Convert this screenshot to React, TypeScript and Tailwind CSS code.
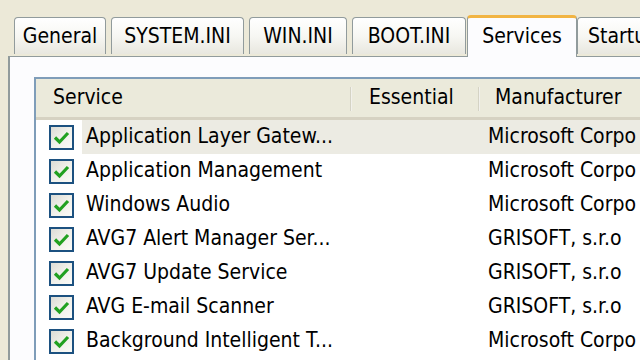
import { Fragment } from 'react';

const FONT = { fontFamily: '"DejaVu Sans Condensed", "DejaVu Sans", sans-serif' };

const tabs = [
  { label: 'General', w: 92 },
  { label: 'SYSTEM.INI', w: 133 },
  { label: 'WIN.INI', w: 98 },
  { label: 'BOOT.INI', w: 114 },
];

// last row only peeks in at the bottom edge, its text is below the fold
const rows = [
  ['Application Layer Gatew...', 'Microsoft Corpo'],
  ['Application Management', 'Microsoft Corpo'],
  ['Windows Audio', 'Microsoft Corpo'],
  ['AVG7 Alert Manager Ser...', 'GRISOFT, s.r.o'],
  ['AVG7 Update Service', 'GRISOFT, s.r.o'],
  ['AVG E-mail Scanner', 'GRISOFT, s.r.o'],
  ['Background Intelligent T...', 'Microsoft Corpo'],
  ['', ''],
];

function CheckBox() {
  return (
    <div className="w-[25px] h-[25px] shrink-0 border-2 border-[#1c5180] bg-gradient-to-br from-[#dcdcd6] via-[#f0f0ea] to-[#fbfbf8] flex items-center justify-center">
      <svg width="17" height="15" viewBox="0 0 17 15">
        <path d="M2 7.5 L6.5 12 L15 3" fill="none" stroke="#21a121" strokeWidth="3.2" />
      </svg>
    </div>
  );
}

export default function App() {
  return (
    <div className="w-[640px] h-[360px] overflow-hidden bg-[#ece9d8] text-black" style={FONT}>
      {/* tab strip */}
      <div className="flex items-end h-[56px] pl-[14px] pt-[14px]">
        {tabs.map((t) => (
          <div
            key={t.label}
            style={{ width: t.w }}
            className="h-[37px] mr-[5px] shrink-0 rounded-t-[4px] border border-b-0 border-[#919b9c] bg-gradient-to-b from-[#ffffff] via-[#f7f7f3] to-[#e8e7df] flex items-center justify-center text-[21px] pt-[2px] mb-[2px]"
          >
            {t.label}
          </div>
        ))}
        <div className="w-[110px] h-[42px] -ml-[4px] shrink-0 rounded-t-[4px] border-x border-[#919b9c] border-t-[3px] border-t-[#f1b443] bg-[#fcfcfe] flex items-start justify-center pt-[3px] text-[21px] -mb-[1px] relative z-10">
          Services
        </div>
        <div className="w-[80px] h-[37px] shrink-0 rounded-tl-[4px] border border-b-0 border-[#919b9c] bg-gradient-to-b from-[#ffffff] via-[#f7f7f3] to-[#e8e7df] flex items-center pl-[10px] pt-[2px] text-[21px] mb-[2px]">
          Startup
        </div>
      </div>

      {/* panel */}
      <div className="ml-[8px] h-[304px] border-l-2 border-t border-[#919b9c] bg-[#fcfcfe] pl-[24px] pt-[20px]">
        <div className="h-full border-l-2 border-t-2 border-[#7f9db9] bg-white">
          {/* header */}
          <div className="flex h-[41px] bg-[#ebeadb] border-b-[3px] border-[#d6d2c2] text-[21px]">
            <div className="w-[316px] flex items-center pl-[17px] relative">
              Service
              <div className="absolute right-0 top-[8px] h-[24px] w-[2px] bg-gradient-to-r from-[#c7c5b2] to-white" />
            </div>
            <div className="w-[128px] flex items-center pl-[17px] relative">
              Essential
              <div className="absolute right-0 top-[8px] h-[24px] w-[2px] bg-gradient-to-r from-[#c7c5b2] to-white" />
            </div>
            <div className="flex-1 flex items-center pl-[15px]">Manufacturer</div>
          </div>
          {/* rows */}
          <div className="flex flex-col text-[21px]">
            {rows.map((r, i) => (
              <Fragment key={i}>
                <div className="flex h-[34px] items-center">
                  <div className="w-[46px] shrink-0 flex justify-end pr-[8px]">
                    <CheckBox />
                  </div>
                  <div className={`flex-1 flex h-full items-center ${i === 0 ? 'bg-[#ecebe3]' : ''}`}>
                    <div className="w-[406px] shrink-0 pl-[4px] whitespace-nowrap">{r[0]}</div>
                    <div className="whitespace-nowrap">{r[1]}</div>
                  </div>
                </div>
              </Fragment>
            ))}
          </div>
        </div>
      </div>
    </div>
  );
}
